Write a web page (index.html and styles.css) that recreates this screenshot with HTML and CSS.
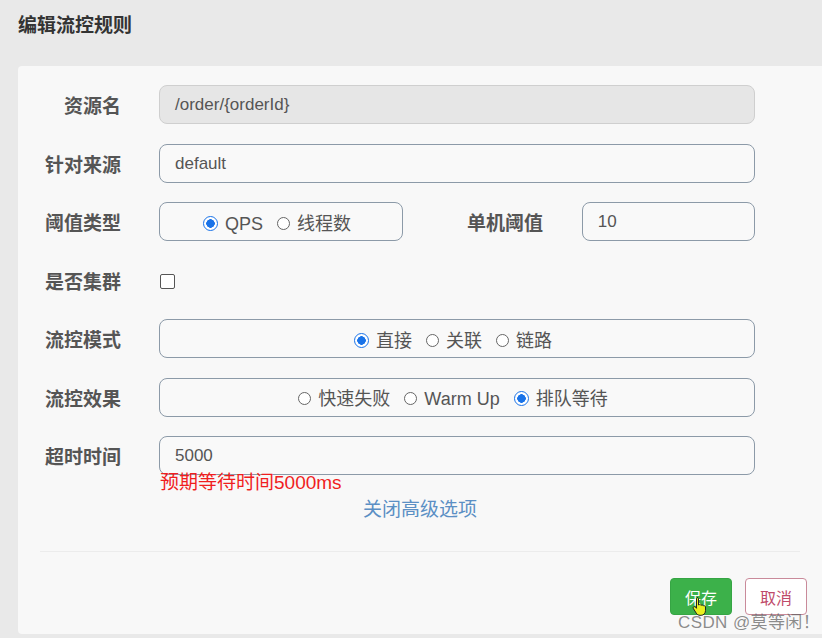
FILE: index.html
```html
<!DOCTYPE html>
<html lang="zh-CN">
<head>
    <meta charset="UTF-8">
    <link rel="stylesheet" href="styles.css">
</head>
<body>
    <div class="dialog">
        <div class="dialog-title">编辑流控规则</div>

        <div class="panel">
            <div class="form">
                <div class="label">资源名</div>
                <div class="field disabled">/order/{orderId}</div>

                <div class="label">针对来源</div>
                <div class="field">default</div>

                <div class="label">阈值类型</div>
                <div class="split">
                    <div class="field radios short">
                        <span class="radio on"></span>QPS
                        <span class="radio"></span>线程数
                    </div>
                    <div class="label sub">单机阈值</div>
                    <div class="field count">10</div>
                </div>

                <div class="label">是否集群</div>
                <div class="check-row"><span class="checkbox"></span></div>

                <div class="label">流控模式</div>
                <div class="field radios">
                    <span class="radio on"></span>直接
                    <span class="radio"></span>关联
                    <span class="radio"></span>链路
                </div>

                <div class="label">流控效果</div>
                <div class="field radios">
                    <span class="radio"></span>快速失败
                    <span class="radio"></span>Warm Up
                    <span class="radio on"></span>排队等待
                </div>

                <div class="label">超时时间</div>
                <div class="field-wrap">
                    <div class="field">5000</div>
                    <div class="hint">预期等待时间5000ms</div>
                </div>
            </div>

            <div class="toggle">关闭高级选项</div>

            <div class="footer">
                <button class="btn save">保存</button>
                <button class="btn cancel">取消</button>
            </div>
        </div>
    </div>

    <!-- cursor over the save button -->
    <svg class="cursor" width="16" height="20" viewBox="0 0 16 20">
        <path d="M5 1.5c.9 0 1.5.6 1.5 1.5v6l.6-.3c.8-.3 1.6 0 1.900.6l.4-.2c.8-.3 1.6 0 1.9.7l.4-.1c.9-.2 1.7.4 1.8 1.3v3.5c0 2.6-1.7 4.8-4.4 4.8H8c-1.7 0-2.9-.8-3.8-2.2L1.4 12.6c-.5-.8-.2-1.6.5-1.9.6-.3 1.3 0 1.7.5l.9 1.1V3c0-.9.6-1.5 1.5-1.5z" fill="#e8f020" stroke="#222" stroke-width="1"/>
    </svg>

    <div class="watermark">CSDN @莫等闲！</div>
</body>
</html>
```

FILE: styles.css
```css
body {
    margin: 0;
    background-color: #e9e9e9;
    font-family: "Liberation Sans", "Noto Sans CJK SC", sans-serif;
    color: #555;
    width: 822px;
    height: 638px;
    overflow: hidden;
    position: relative;
}

.dialog-title {
    padding: 14px 0 0 18px;
    height: 52px;
    font-size: 19px;
    line-height: 24px;
    font-weight: bold;
    color: #333;
}

.panel {
    margin-left: 18px;
    height: 568px;
    background-color: #f8f8f8;
    border-radius: 4px 0 0 4px;
    box-sizing: border-box;
    padding-top: 19px;
}

.form {
    display: grid;
    grid-template-columns: 103px 596px;
    column-gap: 38px;
    row-gap: 19.5px;
}

.label {
    font-size: 19px;
    font-weight: bold;
    color: #555;
    text-align: right;
    line-height: 43px;
    height: 39px;
}

.field {
    height: 39px;
    box-sizing: border-box;
    border: 1px solid #8c9aa8;
    border-radius: 8px;
    background-color: #f9f9f9;
    padding-left: 15px;
    font-size: 17px;
    line-height: 37px;
    color: #555;
}

.field.disabled {
    background-color: #e6e6e6;
    border-color: #cfcfcf;
}

.split {
    display: flex;
    align-items: center;
}

.field.short {
    width: 245px;
}

.label.sub {
    width: 78px;
    margin-left: 64px;
    text-align: left;
}

.field.count {
    width: 174px;
    margin-left: 37px;
}

.radios {
    display: flex;
    justify-content: center;
    align-items: center;
    padding: 4px 8px 0 0;
    font-size: 18px;
    line-height: 24px;
}

.radio {
    width: 13px;
    height: 13px;
    border: 1px solid #666;
    border-radius: 50%;
    margin: 0 7px 1px 14px;
    box-sizing: border-box;
    background-color: #fff;
}

.radio:first-child {
    margin-left: 0;
}

.radio.on {
    border: 1px solid #1a73e8;
    background: radial-gradient(circle, #1a73e8 0 4px, #fff 4.5px);
    width: 15px;
    height: 15px;
}

.check-row {
    display: flex;
    align-items: center;
    height: 39px;
}

.checkbox {
    width: 13px;
    height: 13px;
    border: 1px solid #555;
    border-radius: 2px;
    background-color: #fff;
    margin-left: 1px;
    margin-top: 3px;
}

.hint {
    color: #f01e1e;
    font-size: 19px;
    line-height: 22px;
    padding-left: 1px;
    margin-top: -3px;
}

.toggle {
    text-align: center;
    color: #5b8fc4;
    font-size: 19px;
    margin-top: 3px;
    line-height: 26px;
}

.footer {
    margin: 28px 22px 0 22px;
    border-top: 1px solid #ececec;
    padding-top: 26px;
    display: flex;
    justify-content: flex-end;
    gap: 13px;
}

.btn {
    width: 62px;
    height: 37px;
    border-radius: 4px;
    font-family: "Noto Sans CJK SC", sans-serif;
    font-size: 16px;
    cursor: pointer;
}

.btn.save {
    background-color: #3cb14a;
    border: 1px solid #36a544;
    color: #fff;
}

.btn.cancel {
    background-color: #fff;
    border: 1px solid #c98a9a;
    color: #c04a6a;
    margin-right: -7px;
}

.cursor {
    position: absolute;
    left: 692px;
    top: 596px;
}

.watermark {
    position: absolute;
    left: 678px;
    top: 608px;
    font-size: 17px;
    letter-spacing: 0.4px;
    white-space: nowrap;
    color: rgba(90, 90, 90, 0.7);
}
```
